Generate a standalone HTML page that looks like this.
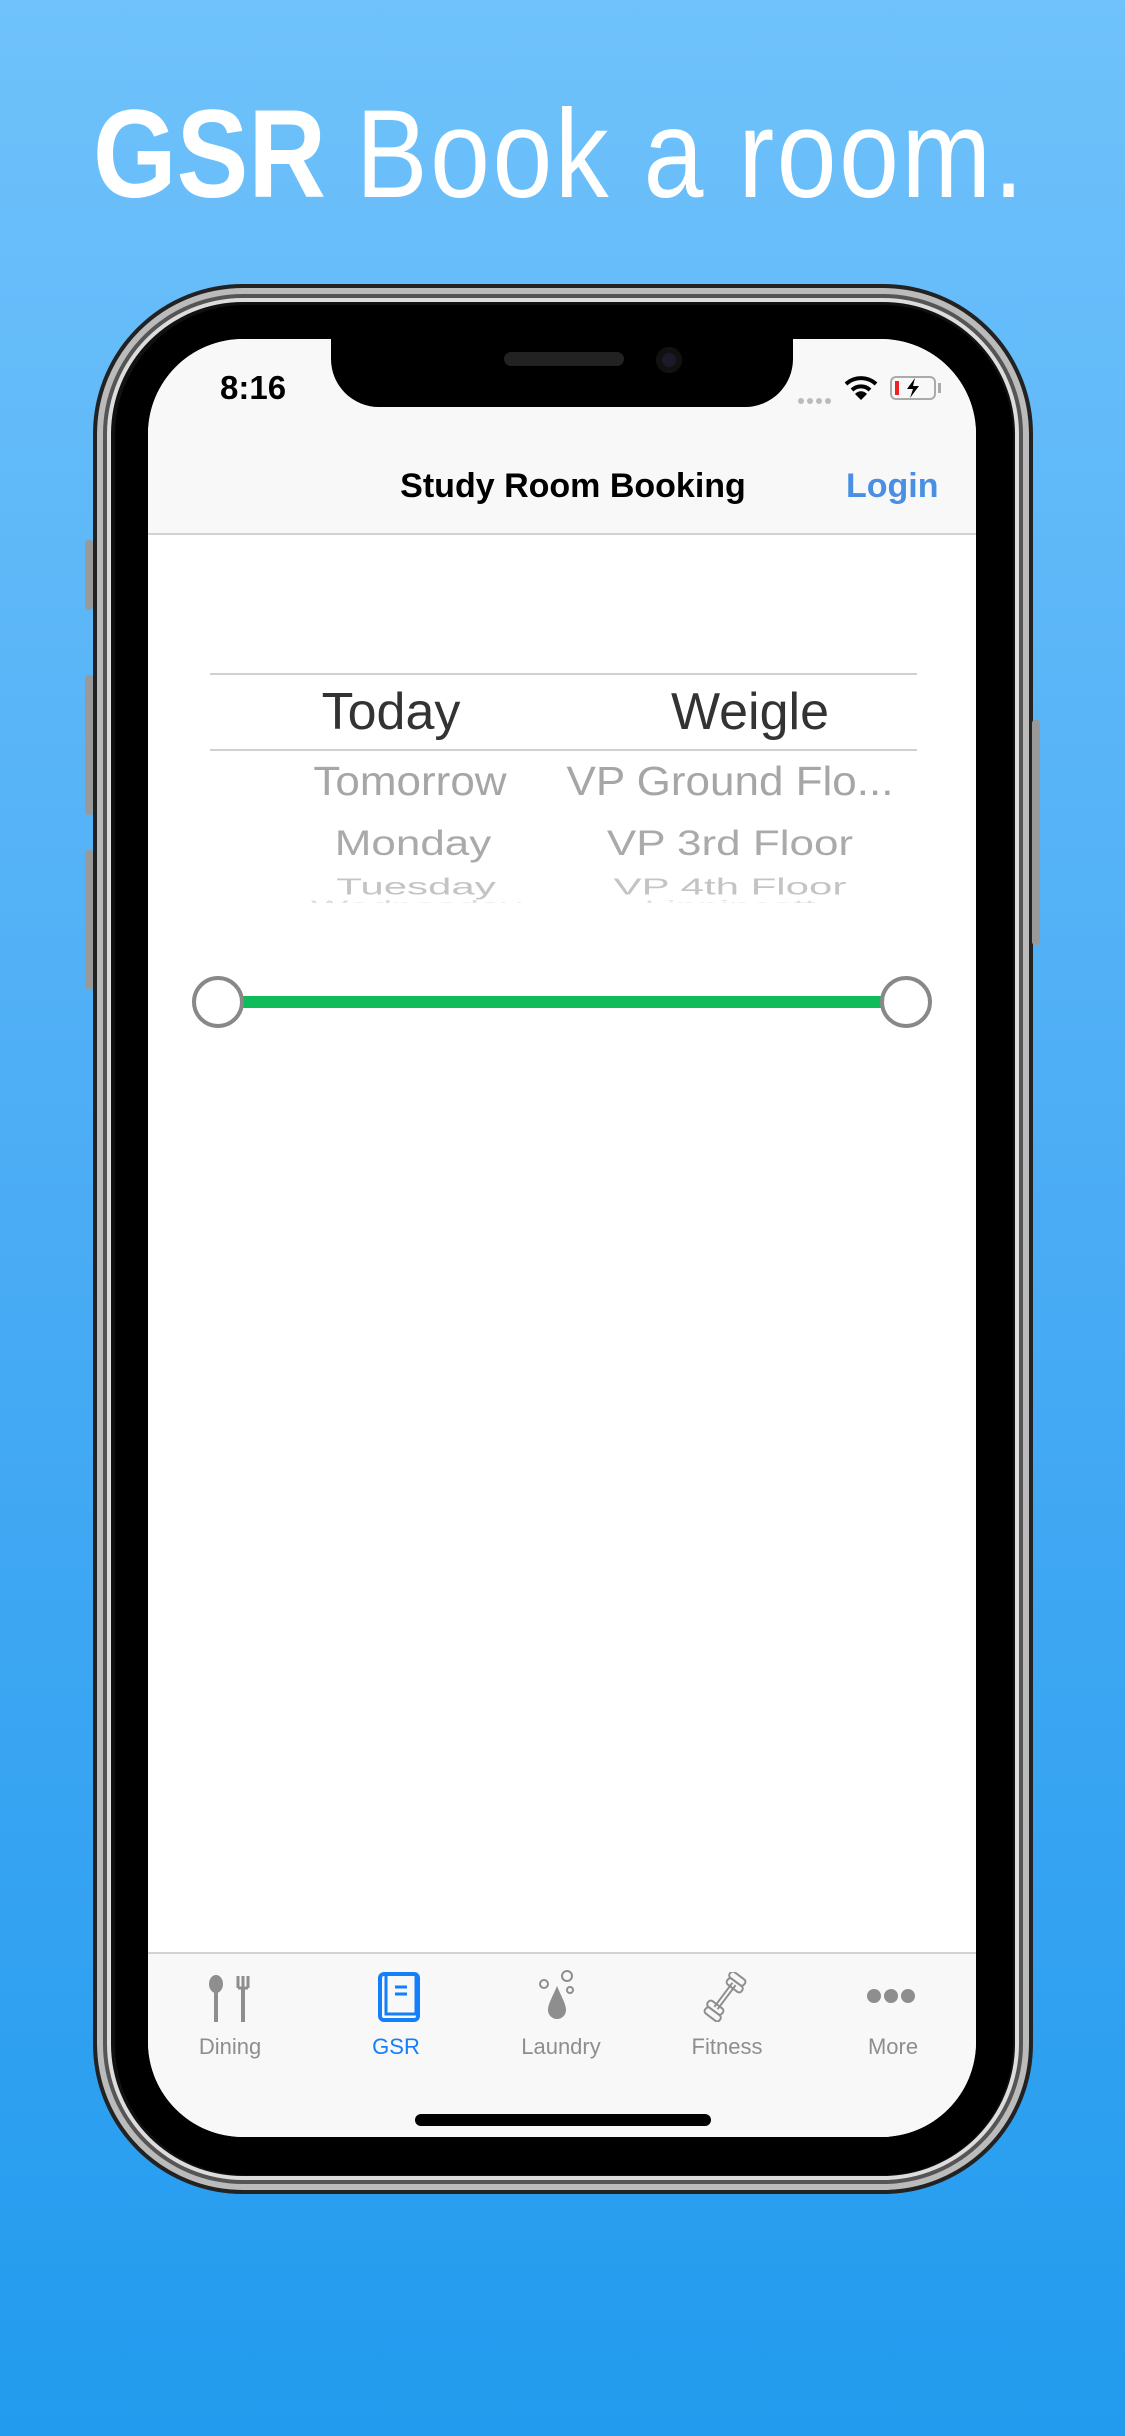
<!DOCTYPE html>
<html><head><meta charset="utf-8"><style>
*{margin:0;padding:0;box-sizing:border-box}
body{width:1125px;height:2436px;overflow:hidden;background:linear-gradient(180deg,#6fc2fb 0%,#4aacf5 50%,#229bee 100%);font-family:"Liberation Sans",sans-serif;position:relative}
.title{position:absolute;left:93px;top:80px;color:#fff;font-size:125px;white-space:nowrap;transform:scaleX(0.86);transform-origin:left top;line-height:150px}
.title b{font-weight:bold}
.title span{letter-spacing:3px}
.phone{position:absolute;left:93px;top:284px;width:940px;height:1910px;border-radius:150px;background:#111;border:4px solid #222;box-shadow:inset 0 0 0 6px #bbb,inset 0 0 0 10px #555,inset 0 0 0 14px #ddd}
.bez{position:absolute;left:115px;top:305px;width:898px;height:1870px;border-radius:130px;background:#000}
.btn{position:absolute;background:#999;border-radius:3px;width:8px}
.screen{position:absolute;left:148px;top:339px;width:828px;height:1798px;border-radius:95px;background:#fff;overflow:hidden}
.nav{position:absolute;left:0;top:0;width:828px;height:196px;background:#f8f8f8;border-bottom:2px solid #d2d2d2}
.notch{position:absolute;left:183px;top:0;width:462px;height:68px;background:#000;border-radius:0 0 48px 48px}
.abs{position:absolute}
.tab{position:absolute;left:0;top:1613px;width:828px;height:185px;background:#f8f8f8;border-top:2px solid #d2d2d2}
.tl{position:absolute;top:80px;width:160px;margin-left:-80px;text-align:center;font-size:22px;color:#8e8e8e}
.pk{position:absolute;text-align:center;white-space:nowrap;width:340px;margin-left:-170px}
</style></head><body>
<div class="title"><b>GSR</b> <span>Book a room.</span></div>
<div class="phone"></div>
<div class="bez"></div>
<div class="btn" style="left:85px;top:540px;height:70px"></div>
<div class="btn" style="left:85px;top:675px;height:140px"></div>
<div class="btn" style="left:85px;top:850px;height:140px"></div>
<div class="btn" style="left:1032px;top:720px;height:225px"></div>
<div class="screen">
 <div class="nav">
  <div class="abs" style="left:72px;top:30px;font-size:33px;font-weight:bold;color:#000">8:16</div>
  <div class="abs" style="left:650px;top:52px;width:36px;height:6px;"><span style="display:inline-block;width:6px;height:6px;border-radius:3px;background:#bbb;margin-right:3px"></span><span style="display:inline-block;width:6px;height:6px;border-radius:3px;background:#bbb;margin-right:3px"></span><span style="display:inline-block;width:6px;height:6px;border-radius:3px;background:#bbb;margin-right:3px"></span><span style="display:inline-block;width:6px;height:6px;border-radius:3px;background:#bbb"></span></div>
  <svg class="abs" style="left:696px;top:36px" width="34" height="26" viewBox="0 0 34 26"><path d="M2 9 A22 22 0 0 1 32 9" stroke="#000" stroke-width="4" fill="none"/><path d="M8 15 A13 13 0 0 1 26 15" stroke="#000" stroke-width="4" fill="none"/><path d="M17 25 L11 19 A8 8 0 0 1 23 19Z" fill="#000"/></svg>
  <div class="abs" style="left:742px;top:37px;width:46px;height:24px;border:2px solid #aaa;border-radius:6px"><div style="position:absolute;left:3px;top:3px;width:4px;height:14px;background:#e22"></div><svg style="position:absolute;left:12px;top:0" width="18" height="20"><path d="M11 0 L3 11 H9 L6 20 L15 8 H9Z" fill="#000"/></svg></div>
  <div class="abs" style="left:790px;top:44px;width:3px;height:10px;background:#aaa"></div>
  <div class="abs" style="left:0;width:828px;top:128px;text-align:center;font-size:34px;font-weight:bold;color:#000;padding-left:22px">Study Room Booking</div>
  <div class="abs" style="left:698px;top:128px;font-size:34px;color:#4a90e2;font-weight:bold">Login</div>
 </div>
 <div class="notch"></div>
 <div class="abs" style="left:356px;top:13px;width:120px;height:14px;border-radius:7px;background:#222"></div>
 <div class="abs" style="left:508px;top:8px;width:26px;height:26px;border-radius:13px;background:#1a1a2a;box-shadow:inset 0 0 0 6px #111"></div>
 <div class="abs" style="left:62px;top:334px;width:707px;height:2px;background:#d0d0d0"></div>
 <div class="abs" style="left:62px;top:410px;width:707px;height:2px;background:#d0d0d0"></div>
 <div class="pk" style="left:243px;top:343px;font-size:52px;color:#333">Today</div>
 <div class="pk" style="left:602px;top:343px;font-size:52px;color:#333">Weigle</div>
 <div class="pk" style="left:262px;top:418px;font-size:44px;color:#a6a6a6;transform:scaleY(.93)">Tomorrow</div>
 <div class="pk" style="left:582px;top:418px;font-size:44px;color:#a6a6a6;transform:scaleY(.93)">VP Ground Flo...</div>
 <div class="pk" style="left:265px;top:480px;font-size:44px;color:#aaa;transform:scaleY(.8)">Monday</div>
 <div class="pk" style="left:582px;top:480px;font-size:44px;color:#aaa;transform:scaleY(.8)">VP 3rd Floor</div>
 <div class="pk" style="left:268px;top:524px;font-size:42px;color:#c4c4c4;transform:scaleY(.55)">Tuesday</div>
 <div class="pk" style="left:582px;top:524px;font-size:42px;color:#c4c4c4;transform:scaleY(.55)">VP 4th Floor</div>
 <div class="abs" style="left:0;top:554px;width:828px;height:10px;overflow:hidden"><div class="pk" style="left:268px;top:-10px;font-size:40px;color:#ddd;transform:scaleY(.35)">Wednesday</div><div class="pk" style="left:582px;top:-10px;font-size:40px;color:#ddd;transform:scaleY(.35)">Lippincott</div></div>
 <div class="abs" style="left:70px;top:657px;width:690px;height:12px;background:#10bb5a"></div>
 <div class="abs" style="left:44px;top:637px;width:52px;height:52px;border-radius:26px;background:#fff;border:4px solid #888"></div>
 <div class="abs" style="left:732px;top:637px;width:52px;height:52px;border-radius:26px;background:#fff;border:4px solid #888"></div>
 <div class="tab">
  <svg class="abs" style="left:58px;top:20px" width="50" height="50" viewBox="0 0 50 50"><ellipse cx="10" cy="10" rx="7" ry="9" fill="#8e8e8e"/><rect x="8" y="14" width="4" height="34" fill="#8e8e8e"/><path d="M32 2v12M37 2v12M42 2v12M32 14h10" stroke="#8e8e8e" stroke-width="3" fill="none"/><rect x="35" y="14" width="4" height="34" fill="#8e8e8e"/></svg>
  <svg class="abs" style="left:228px;top:18px" width="46" height="52" viewBox="0 0 46 52"><rect x="4" y="2" width="38" height="46" rx="4" fill="none" stroke="#147efb" stroke-width="4"/><rect x="10" y="2" width="30" height="40" fill="none" stroke="#147efb" stroke-width="3"/><path d="M19 15h12M19 22h12" stroke="#147efb" stroke-width="3"/></svg>
  <svg class="abs" style="left:390px;top:16px" width="44" height="52" viewBox="0 0 44 52"><circle cx="6" cy="14" r="4" fill="none" stroke="#8e8e8e" stroke-width="2"/><circle cx="29" cy="6" r="5" fill="none" stroke="#8e8e8e" stroke-width="2"/><circle cx="32" cy="20" r="3" fill="none" stroke="#8e8e8e" stroke-width="2"/><path d="M19 16 C14 28 10 34 10 40 a9 9 0 0 0 18 0 C28 34 24 28 19 16Z" fill="#8e8e8e"/></svg>
  <svg class="abs" style="left:554px;top:18px" width="46" height="50" viewBox="0 0 46 50"><path d="M14 36 L32 12" stroke="#8e8e8e" stroke-width="6"/><path d="M14 36 L32 12" stroke="#f8f8f8" stroke-width="2"/><g fill="none" stroke="#8e8e8e" stroke-width="2"><rect x="26" y="3" width="18" height="7" rx="3" transform="rotate(37 35 7)"/><rect x="24" y="10" width="18" height="7" rx="3" transform="rotate(37 33 13)"/><rect x="4" y="32" width="18" height="7" rx="3" transform="rotate(37 13 36)"/><rect x="2" y="39" width="18" height="7" rx="3" transform="rotate(37 11 42)"/></g></svg>
  <svg class="abs" style="left:718px;top:34px" width="50" height="16"><circle cx="8" cy="8" r="7" fill="#8e8e8e"/><circle cx="25" cy="8" r="7" fill="#8e8e8e"/><circle cx="42" cy="8" r="7" fill="#8e8e8e"/></svg>
  <div class="tl" style="left:82px">Dining</div>
  <div class="tl" style="left:248px;color:#147efb">GSR</div>
  <div class="tl" style="left:413px">Laundry</div>
  <div class="tl" style="left:579px">Fitness</div>
  <div class="tl" style="left:745px">More</div>
  <div class="abs" style="left:267px;top:160px;width:296px;height:12px;border-radius:6px;background:#000"></div>
 </div>
</div>
</body></html>
